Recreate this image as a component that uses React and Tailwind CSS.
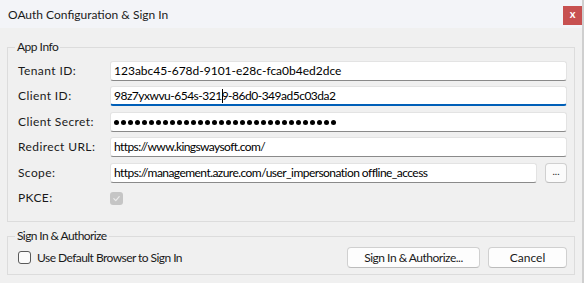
import React from "react";

function TextBox({ children, focused, className = "" }) {
  return (
    <div
      className={
        "flex h-[20px] items-center overflow-hidden whitespace-nowrap rounded-[3px] border border-[#e3e3e3] bg-white pl-[3px] text-[12px] text-black " +
        (focused ? "border-b-2 border-b-[#005fb8]" : "border-b-[#8a8a8a]") +
        " " +
        className
      }
    >
      {children}
    </div>
  );
}

function Row({ label, children, className = "" }) {
  return (
    <div className={"flex h-[20px] items-center " + className}>
      <div className="w-[92px] shrink-0 text-[12px] tracking-[0.4px] text-[#1a1a1a]">{label}</div>
      <div className="flex min-w-0 flex-1 items-center">{children}</div>
    </div>
  );
}

export default function App() {
  const dots = Array.from({ length: 32 });

  return (
    <div className="flex h-[283px] w-[584px] bg-[#f0f0f0] font-[Lato,sans-serif] text-[12px] text-[#1a1a1a]">
      <div className="flex w-[582px] flex-col">
        {/* title bar */}
        <div className="flex h-[28px] items-start justify-between bg-[#f3f4f8]">
          <div className="pl-[8px] pt-[6px] text-[12px] text-[#1b1b1b]">OAuth Configuration &amp; Sign In</div>
          <div className="mt-[6px] flex h-[19px] w-[19px] items-center justify-center bg-[#c75050] pb-[2px] text-[11px] font-bold text-white">
            x
          </div>
        </div>

        {/* App Info */}
        <fieldset className="ml-[7px] mt-[11px] w-[568px] border border-[#dcdcdc] pb-[13px] pl-[10px] pr-[7px] pt-[6px]">
          <legend className="ml-[-3px] px-[2px] leading-[16px] tracking-[-0.5px]">App Info</legend>
          <Row label="Tenant ID:">
            <TextBox className="w-full">123abc45-678d-9101-e28c-fca0b4ed2dce</TextBox>
          </Row>
          <Row label="Client ID:" className="mt-[5px]">
            <TextBox focused className="w-full tracking-[-0.5px]">
              98z7yxwvu-654s-321
              <span className="mr-[-1px] inline-block h-[14px] w-px bg-black" />
              9-86d0-349ad5c03da2
            </TextBox>
          </Row>
          <Row label="Client Secret:" className="mt-[6px]">
            <TextBox className="w-full gap-[2px]">
              {dots.map((_, i) => (
                <span key={i} className="h-[5px] w-[5px] shrink-0 rounded-full bg-black" />
              ))}
            </TextBox>
          </Row>
          <Row label="Redirect URL:" className="mt-[5px]">
            <TextBox className="w-full tracking-[-0.6px]">https://www.kingswaysoft.com/</TextBox>
          </Row>
          <Row label="Scope:" className="mt-[6px]">
            <TextBox className="w-[427px] tracking-[-0.55px]">https://management.azure.com/user_impersonation offline_access</TextBox>
            <div className="ml-auto flex h-[20px] w-[22px] items-center justify-center rounded-[4px] border border-[#d0d0d0] border-b-[#bcbcbc] bg-[#fbfbfb] pb-[3px] text-[10px] text-[#1a1a1a]">
              ...
            </div>
          </Row>
          <Row label="PKCE:" className="mt-[5px]">
            <div className="flex h-[13px] w-[13px] items-center justify-center rounded-[3px] bg-[#c5c5c5]">
              <svg width="9" height="9" viewBox="0 0 10 10" fill="none">
                <path d="M2 5.2 L4.2 7.3 L8 3" stroke="#ececec" strokeWidth="1.3" strokeLinecap="round" strokeLinejoin="round" />
              </svg>
            </div>
          </Row>
        </fieldset>

        {/* Sign In & Authorize */}
        <fieldset className="ml-[7px] mt-[6px] w-[568px] border border-[#dcdcdc] pb-[6px] pl-[10px] pr-[7px] pt-[3px]">
          <legend className="ml-[-3px] px-[2px] leading-[16px] tracking-[-0.6px]">Sign In &amp; Authorize</legend>
          <div className="flex h-[21px] items-center">
            <div className="h-[13px] w-[13px] rounded-[3px] border border-[#5a5a5a] bg-[#fbfbfb]" />
            <span className="ml-[6px] text-[12px] tracking-[-0.55px]">Use Default Browser to Sign In</span>
            <div className="ml-auto flex h-[21px] w-[133px] items-center justify-center rounded-[4px] border border-[#d0d0d0] border-b-[#bcbcbc] bg-[#fdfdfd] tracking-[-0.5px]">
              Sign In &amp; Authorize...
            </div>
            <div className="ml-[8px] flex h-[21px] w-[79px] items-center justify-center rounded-[4px] border border-[#d0d0d0] border-b-[#bcbcbc] bg-[#fdfdfd]">
              Cancel
            </div>
          </div>
        </fieldset>
      </div>
      <div className="w-[2px] bg-[#cfcfcf]" />
    </div>
  );
}
